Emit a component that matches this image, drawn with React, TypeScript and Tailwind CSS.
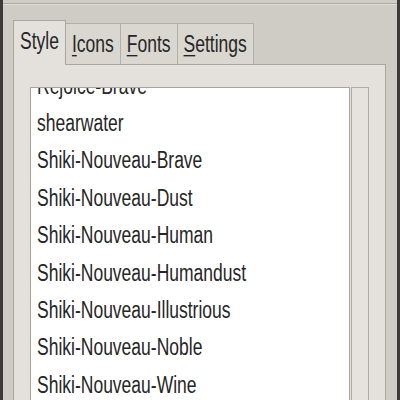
const themes = [
  'Rejoice-Brave',
  'shearwater',
  'Shiki-Nouveau-Brave',
  'Shiki-Nouveau-Dust',
  'Shiki-Nouveau-Human',
  'Shiki-Nouveau-Humandust',
  'Shiki-Nouveau-Illustrious',
  'Shiki-Nouveau-Noble',
  'Shiki-Nouveau-Wine',
  'Shiki-Nouveau-Wise',
];

// the glyphs in this shot are tall and narrow, so stretch them a bit
function Label({ children }: { children: React.ReactNode }) {
  return <span className="inline-block scale-y-[1.38]">{children}</span>;
}

function Tab({ label, mnemonic, active }: { label: string; mnemonic?: boolean; active?: boolean }) {
  const first = label.slice(0, 1);
  const rest = label.slice(1);
  if (active) {
    return (
      <div className="relative z-10 -mb-px flex h-[45px] items-center border border-b-0 border-[#aaa69e] bg-[#e4e1dc] px-[6px] pb-[4px]">
        <Label>{label}</Label>
      </div>
    );
  }
  return (
    <div className="flex h-[41px] items-center border border-l-0 border-b-0 border-[#b3afa7] bg-[#dad6d0] px-[6px]">
      <Label>
        {mnemonic ? <span className="underline decoration-1 underline-offset-[2px]">{first}</span> : first}
        {rest}
      </Label>
    </div>
  );
}

export default function App() {
  return (
    <div
      className="flex h-[400px] w-[400px] overflow-hidden bg-[#cfcbc5] text-[17.5px] text-[#262626]"
      style={{ fontFamily: '"Liberation Sans", Arial, sans-serif' }}
    >
      {/* window edge */}
      <div className="w-[3px] shrink-0 bg-[#3c3b37]" />

      <div className="flex min-w-0 flex-1 flex-col">
        <div className="h-[3px] shrink-0" />
        <div className="h-[1px] shrink-0 bg-[#aeaaa2]" />
        <div className="h-[1px] shrink-0 bg-[#e0ddd8]" />

        <div className="flex min-h-0 flex-1 flex-col pl-[10px] pr-[11px] pt-[15px]">
          {/* Tabs */}
          <div className="flex items-end">
            <Tab label="Style" active />
            <Tab label="Icons" mnemonic />
            <Tab label="Fonts" mnemonic />
            <Tab label="Settings" mnemonic />
          </div>

          {/* Panel */}
          <div className="flex min-h-0 flex-1 border border-b-0 border-[#aaa69e] bg-[#e4e1dc] pl-[16px] pr-[16px] pt-[22px]">
            <div className="min-w-0 flex-1 overflow-hidden border border-b-0 border-[#a8a49c] bg-white">
              <ul className="mt-[-21px]">
                {themes.map((t) => (
                  <li key={t} className="flex h-[37.4px] items-center whitespace-nowrap pl-[6px]">
                    <Label>{t}</Label>
                  </li>
                ))}
              </ul>
            </div>
            <div className="ml-px w-[18px] shrink-0 border border-b-0 border-[#b0aca4] bg-[#e6e3de]" />
          </div>
        </div>
      </div>

      <div className="w-[3px] shrink-0 bg-[#3c3b37]" />
    </div>
  );
}
